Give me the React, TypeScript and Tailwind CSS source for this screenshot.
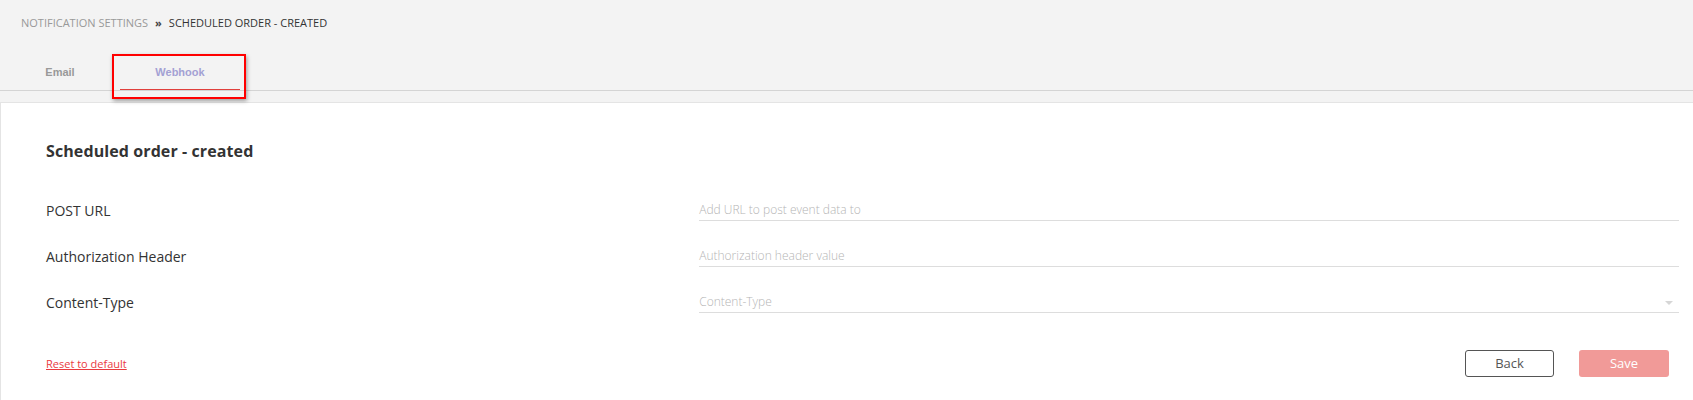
import React from "react";

const fields = [
  { label: "POST URL", placeholder: "Add URL to post event data to", select: false },
  { label: "Authorization Header", placeholder: "Authorization header value", select: false },
  { label: "Content-Type", placeholder: "Content-Type", select: true },
];

export default function App() {
  return (
    <div className="min-h-screen bg-[#f3f3f3] font-['Open_Sans',sans-serif] text-[#333]">
      {/* breadcrumb */}
      <div className="h-[46px] pl-[21px] pt-[15px] text-[11px] leading-[16px] uppercase flex items-start gap-[7px]">
        <span className="text-[#999]">Notification settings</span>
        <span className="text-[#444] font-bold">»</span>
        <span className="text-[#333]">Scheduled order - created</span>
      </div>

      {/* tabs */}
      <div className="relative flex h-[45px] border-b border-[#d4d4d4] font-['Liberation_Sans',Arial,sans-serif] text-[11px] font-bold">
        <div className="w-[120px] flex flex-col items-center pt-[18px]">
          <span className="leading-[16px] text-[#999]">Email</span>
        </div>
        <div className="w-[120px] flex flex-col items-center pt-[18px]">
          <span className="leading-[16px] text-[#a3a1d3]">Webhook</span>
          <div className="mt-[9px] h-px w-full bg-[#e0403c]" />
        </div>
        <div className="absolute left-[112px] top-[8px] w-[134px] h-[45px] border-2 border-[#f00] shadow-[1px_2px_4px_rgba(0,0,0,0.35)]" />
      </div>

      {/* panel */}
      <div className="mt-[11px] bg-white border-t border-l border-[#e4e4e4] pl-[45px] pr-[14px] pt-[37px] pb-[25px]">
        <h2 className="text-[16px] leading-[22px] font-bold text-[#333] tracking-[0.1px]">Scheduled order - created</h2>

        <div className="mt-[38px] flex flex-col gap-y-[25px]">
          {fields.map((f) => (
            <div key={f.label} className="grid grid-cols-[2fr_3fr] items-center">
              <span className="text-[14px] leading-[20px] text-[#333]">{f.label}</span>
              <div className="relative h-[21px] border-b border-[#dddddd] flex items-center">
                <span className="text-[12px] font-light leading-[20px] text-[#b5b5b5]">{f.placeholder}</span>
                {f.select && (
                  <span className="absolute right-[6px] top-[9px] w-0 h-0 border-l-[4px] border-r-[4px] border-t-[4px] border-l-transparent border-r-transparent border-t-[#d6d6d6]" />
                )}
              </div>
            </div>
          ))}
        </div>

        <div className="mt-[37px] flex items-center justify-between">
          <a href="#" className="text-[11px] leading-[16px] text-[#ea3a3f] underline">Reset to default</a>
          <div className="flex gap-[25px] mr-[10px]">
            <button className="w-[89px] h-[27px] border border-[#555] rounded-[3px] text-[13px] text-[#555] bg-white">Back</button>
            <button className="w-[90px] h-[27px] rounded-[3px] text-[13px] text-white bg-[#f19a98]">Save</button>
          </div>
        </div>
      </div>
    </div>
  );
}
